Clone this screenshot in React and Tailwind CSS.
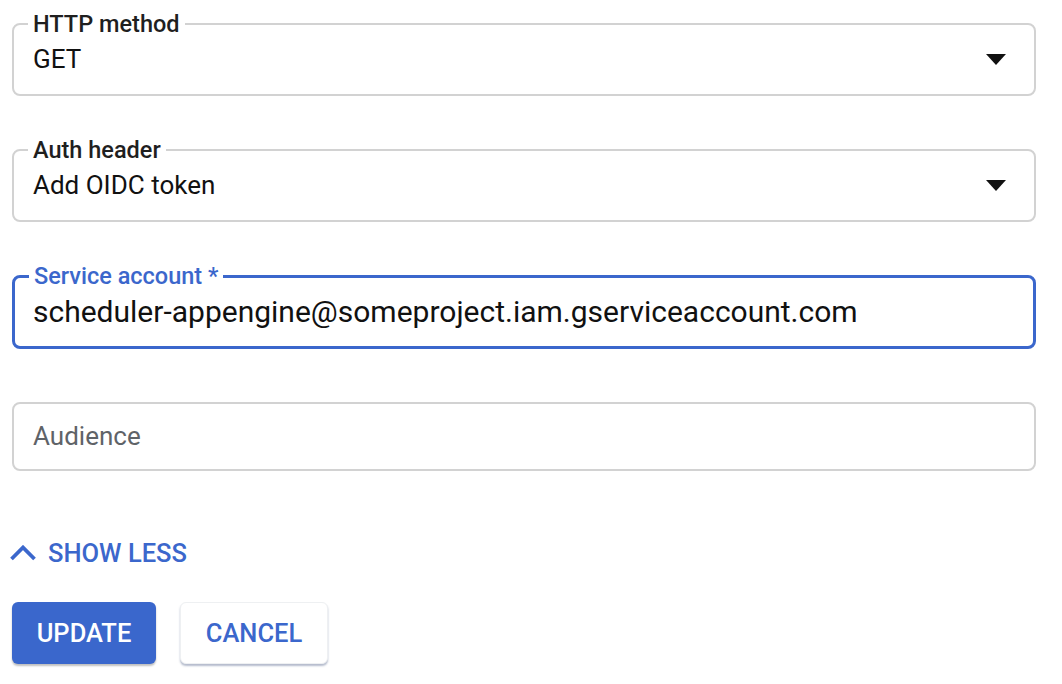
import React from 'react';

const font = { fontFamily: 'Roboto, "Noto Sans", sans-serif' };

// Outlined field with a notched label sitting on the top border
function OutlinedField({ label, value, focused = false, select = false }) {
  return (
    <fieldset
      className={`rounded-lg pl-[14px] pr-[28px] pb-[12px] ${
        focused ? 'border-[3px] border-[#3b67cc]' : 'border-2 border-[#d2d2d2]'
      }`}
    >
      <legend
        className={`px-[5px] text-[23.5px] leading-[24px] font-medium ${
          focused ? 'text-[#3b67cc]' : 'text-[#1f1f1f]'
        }`}
      >
        {label}
      </legend>
      <div className="h-[46px] pl-[5px] flex items-center justify-between">
        <span className={`${focused ? 'text-[30px] -ml-[1px]' : 'text-[26px]'} text-[#111] whitespace-nowrap`}>{value}</span>
        {select && (
          <svg width="20" height="11" viewBox="0 0 20 11" className="shrink-0">
            <path d="M0 0 L20 0 L10 11 Z" fill="#111" />
          </svg>
        )}
      </div>
    </fieldset>
  );
}

export default function App() {
  return (
    <div className="w-[1062px] h-[684px] bg-white overflow-hidden" style={font}>
      <div className="w-[1024px] ml-[12px] pt-[12px] flex flex-col gap-[42px]">
        <OutlinedField label="HTTP method" value="GET" select />
        <OutlinedField label="Auth header" value="Add OIDC token" select />
        <OutlinedField
          label="Service account *"
          value="scheduler-appengine@someproject.iam.gserviceaccount.com"
          focused
        />
        <div className="mt-[11px] h-[69px] border-2 border-[#d2d2d2] rounded-lg pl-[19px] flex items-center">
          <span className="text-[26px] text-[#5f6368]">Audience</span>
        </div>
      </div>

      {/* Show less toggle */}
      <div className="mt-[67px] ml-[10px] flex items-center gap-[12px] h-[30px]">
        <svg width="26" height="16" viewBox="0 0 26 16">
          <path d="M1.5 14 L13 2.5 L24.5 14" fill="none" stroke="#3b67cc" strokeWidth="3.8" />
        </svg>
        <span className="text-[25.5px] font-medium text-[#3b67cc]">SHOW LESS</span>
      </div>

      {/* Actions */}
      <div className="mt-[34px] ml-[12px] flex gap-[24px]">
        <button className="w-[144px] h-[62px] rounded-md bg-[#3a67cc] text-white text-[25.5px] font-medium shadow-[0_2px_2px_rgba(0,0,0,0.25)]">
          UPDATE
        </button>
        <button className="w-[148px] h-[62px] rounded-md bg-white text-[#3b67cc] text-[25.5px] font-medium border border-[#eef0f2] shadow-[0_2px_2px_rgba(40,60,110,0.35)]">
          CANCEL
        </button>
      </div>
    </div>
  );
}
